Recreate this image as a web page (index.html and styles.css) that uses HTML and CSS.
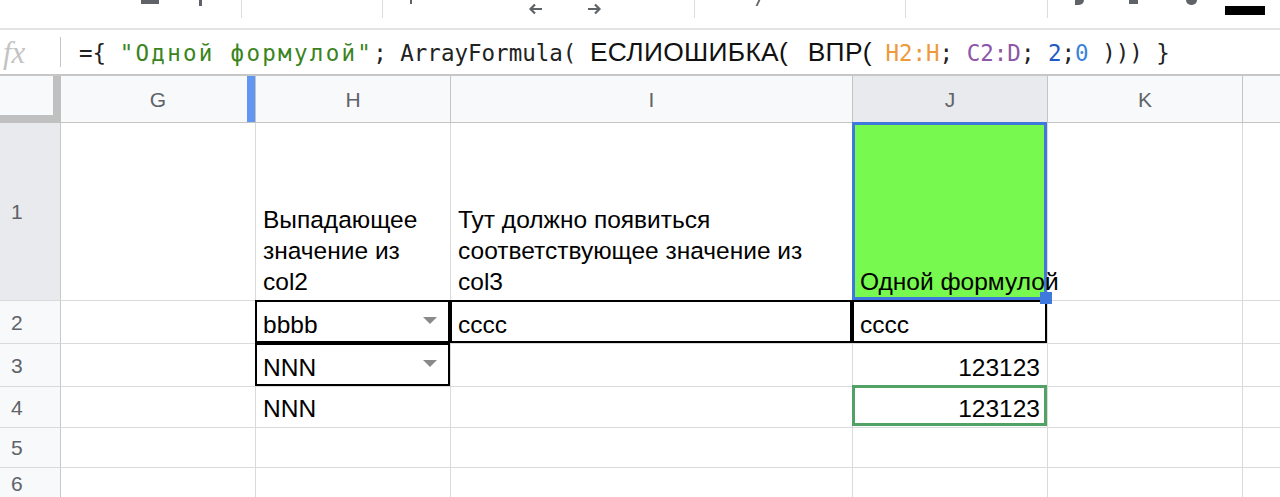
FILE: index.html
```html
<!DOCTYPE html>
<html lang="ru">
<head>
    <meta charset="UTF-8">
    <title>Таблица</title>
    <link rel="stylesheet" href="styles.css">
</head>
<body>
    <div class="toolbar">
        <span class="t-box"></span>
        <span class="t-bar"></span>
        <span class="t-sep s1"></span>
        <span class="t-sep s2"></span>
        <span class="t-tick"></span>
        <svg class="t-arrow a-left" width="15" height="12" viewBox="0 0 15 12"><path d="M14 6H3M7 1.5L2.5 6 7 10.5" fill="none" stroke="#5f6368" stroke-width="2.2"/></svg>
        <svg class="t-arrow a-right" width="15" height="12" viewBox="0 0 15 12"><path d="M1 6h11M8 1.5L12.5 6 8 10.5" fill="none" stroke="#5f6368" stroke-width="2.2"/></svg>
        <span class="t-sep s3"></span>
        <span class="t-slash"></span>
        <span class="t-sep s4"></span>
        <span class="t-sep s5"></span>
        <span class="t-ico i1"></span>
        <span class="t-ico i2"></span>
        <span class="t-ico i3"></span>
        <span class="t-black"></span>
    </div>

    <div class="fbar">
        <span class="fx">fx</span>
        <span class="fsep"></span>
        <div class="formula">={ <span class="str">"Одной формулой"</span>; ArrayFormula( <span class="fn">ЕСЛИОШИБКА( ВПР(</span> <span class="r1">H2:H</span>; <span class="r2">C2:D</span>; <span class="n1">2</span>;<span class="n2">0</span> ))) }</div>
    </div>

    <div class="sheet">
        <!-- column headers -->
        <div class="c corner"></div>
        <div class="c ch ch-g">G</div>
        <div class="c ch">H</div>
        <div class="c ch">I</div>
        <div class="c ch sel">J</div>
        <div class="c ch">K</div>
        <div class="c ch last"></div>

        <!-- row 1 -->
        <div class="c rh sel">1</div>
        <div class="c"></div>
        <div class="c wrap">Выпадающее значение из col2</div>
        <div class="c wrap">Тут должно появиться соответствующее значение из col3</div>
        <div class="c active"><span class="txt">Одной формулой</span><span class="handle"></span></div>
        <div class="c"></div>
        <div class="c last"></div>

        <!-- row 2 -->
        <div class="c rh">2</div>
        <div class="c"></div>
        <div class="c boxed">bbbb<span class="caret"></span></div>
        <div class="c boxed">cccc</div>
        <div class="c boxed">cccc</div>
        <div class="c"></div>
        <div class="c last"></div>

        <!-- row 3 -->
        <div class="c rh">3</div>
        <div class="c"></div>
        <div class="c boxed">NNN<span class="caret"></span></div>
        <div class="c"></div>
        <div class="c num">123123</div>
        <div class="c"></div>
        <div class="c last"></div>

        <!-- row 4 -->
        <div class="c rh">4</div>
        <div class="c"></div>
        <div class="c">NNN</div>
        <div class="c"></div>
        <div class="c num peer">123123</div>
        <div class="c"></div>
        <div class="c last"></div>

        <!-- row 5 -->
        <div class="c rh">5</div>
        <div class="c"></div>
        <div class="c"></div>
        <div class="c"></div>
        <div class="c"></div>
        <div class="c"></div>
        <div class="c last"></div>

        <!-- row 6 -->
        <div class="c rh">6</div>
        <div class="c"></div>
        <div class="c"></div>
        <div class="c"></div>
        <div class="c"></div>
        <div class="c"></div>
        <div class="c last"></div>
    </div>
</body>
</html>
```

FILE: styles.css
```css
body, html {
    margin: 0;
    padding: 0;
    background: #fff;
    font-family: "Liberation Sans", Arial, sans-serif;
    overflow: hidden;
}
body {
    width: 1280px;
    height: 497px;
}

/* toolbar (cut off at the top) */
.toolbar {
    height: 28px;
    border-bottom: 2px solid #e3e3e3;
    display: flex;
    align-items: flex-start;
    overflow: hidden;
}
.toolbar span, .toolbar svg {
    flex: none;
    display: block;
}
.t-box {
    margin-left: 141px;
    width: 18px;
    height: 4px;
    background: #5f6368;
}
.t-bar {
    margin-left: 40px;
    width: 3px;
    height: 6px;
    background: #5f6368;
}
.t-sep {
    width: 1px;
    height: 18px;
    background: #dadce0;
}
.s1 { margin-left: 39px; }
.s2 { margin-left: 140px; }
.s3 { margin-left: 92px; }
.s4 { margin-left: 146px; }
.s5 { margin-left: 141px; }
.t-tick {
    margin-left: 27px;
    width: 2px;
    height: 4px;
    background: #5f6368;
}
.t-arrow {
    margin-top: 3px;
}
.a-left { margin-left: 116px; }
.a-right { margin-left: 44px; }
.t-slash {
    margin-left: 62px;
    width: 2px;
    height: 6px;
    background: #5f6368;
    transform: skewX(-25deg);
}
.t-ico {
    background: #5f6368;
    height: 5px;
}
.i1 {
    margin-left: 27px;
    width: 9px;
    border-radius: 0 0 5px 0;
}
.i2 {
    margin-left: 45px;
    width: 9px;
    height: 4px;
}
.i3 {
    margin-left: 48px;
    width: 11px;
    border-radius: 0 0 6px 6px;
}
.t-black {
    margin-left: 28px;
    margin-top: 6px;
    width: 40px;
    height: 9px;
    background: #000;
}

/* formula bar */
.fbar {
    height: 44px;
    display: flex;
    align-items: center;
}
.fx {
    width: 57px;
    margin-left: 3px;
    font-family: "Liberation Serif", serif;
    font-style: italic;
    font-size: 31px;
    color: #c3c3c3;
    line-height: 1;
}
.fsep {
    width: 1px;
    height: 30px;
    background: #c6c6c6;
}
.formula {
    margin-left: 18px;
    white-space: pre;
    font-family: "DejaVu Sans Mono", monospace;
    font-size: 22.5px;
    color: #222;
}
.formula .str { color: #3a8420; letter-spacing: 2.3px; }
.formula .fn {
    font-family: "Liberation Sans", Arial, sans-serif;
    font-size: 26.4px;
    letter-spacing: 0.3px;
    word-spacing: 12px;
    color: #111;
}
.formula .r1 { color: #ee9a3c; }
.formula .r2 { color: #8e56a8; }
.formula .n1 { color: #1f5bc4; }
.formula .n2 { color: #3b82d9; }

/* grid */
.sheet {
    display: grid;
    grid-template-columns: 61px 195px 195px 402px 195px 195px 1fr;
    grid-template-rows: 47px 178px 43px 43px 41px 40px 1fr;
    border-top: 2px solid #c7c7c7;
    height: 423px;
    box-sizing: border-box;
}
.c {
    box-sizing: border-box;
    border-right: 1px solid #dadada;
    border-bottom: 1px solid #dadada;
    padding: 0 7px 3px;
    display: flex;
    align-items: flex-end;
    font-size: 24.5px;
    line-height: 31px;
    color: #000;
    position: relative;
    min-width: 0;
    white-space: nowrap;
}
.c.last {
    border-right: none;
}
.wrap {
    white-space: normal;
}
.num {
    justify-content: flex-end;
}
.corner {
    background: #f8f9fa;
    border-right: 8px solid #c0c0c0;
    border-bottom: 8px solid #c0c0c0;
}
.ch {
    background: #f8f9fa;
    border-right-color: #c4c4c4;
    border-bottom-color: #c4c4c4;
    justify-content: center;
    align-items: center;
    padding: 0;
    font-size: 21px;
    color: #5f6368;
}
.ch.sel, .rh.sel {
    background: #e8eaed;
}
.ch-g::after {
    content: "";
    position: absolute;
    top: 0;
    bottom: 0;
    right: 0;
    width: 8px;
    background: #6196f2;
}
.rh {
    background: #f8f9fa;
    border-right-color: #c8c8c8;
    align-items: center;
    padding: 0 0 0 11px;
    font-size: 21px;
    color: #5f6368;
}

/* selected cell J1 */
.active {
    background: #77f94f;
    overflow: visible;
}
.active::before {
    content: "";
    position: absolute;
    top: -1px;
    left: -1px;
    right: 0;
    bottom: 0;
    border: 3px solid #4079de;
}
.active .txt {
    position: relative;
    z-index: 1;
}
.handle {
    position: absolute;
    right: -5px;
    bottom: -4px;
    width: 12px;
    height: 12px;
    background: #4079de;
    z-index: 2;
}

/* black borders */
.boxed::after {
    content: "";
    position: absolute;
    top: -1px;
    left: -1px;
    right: 0;
    bottom: 0;
    border: 2px solid #000;
}
.caret {
    margin: 0 6px 0 auto;
    align-self: center;
    width: 0;
    height: 0;
    border-left: 7px solid transparent;
    border-right: 7px solid transparent;
    border-top: 7px solid #8a8a8a;
}

/* another user's cursor on J4 */
.peer::after {
    content: "";
    position: absolute;
    top: -2px;
    left: -1px;
    right: 0;
    bottom: 1px;
    border: 3px solid #53a265;
}
```
